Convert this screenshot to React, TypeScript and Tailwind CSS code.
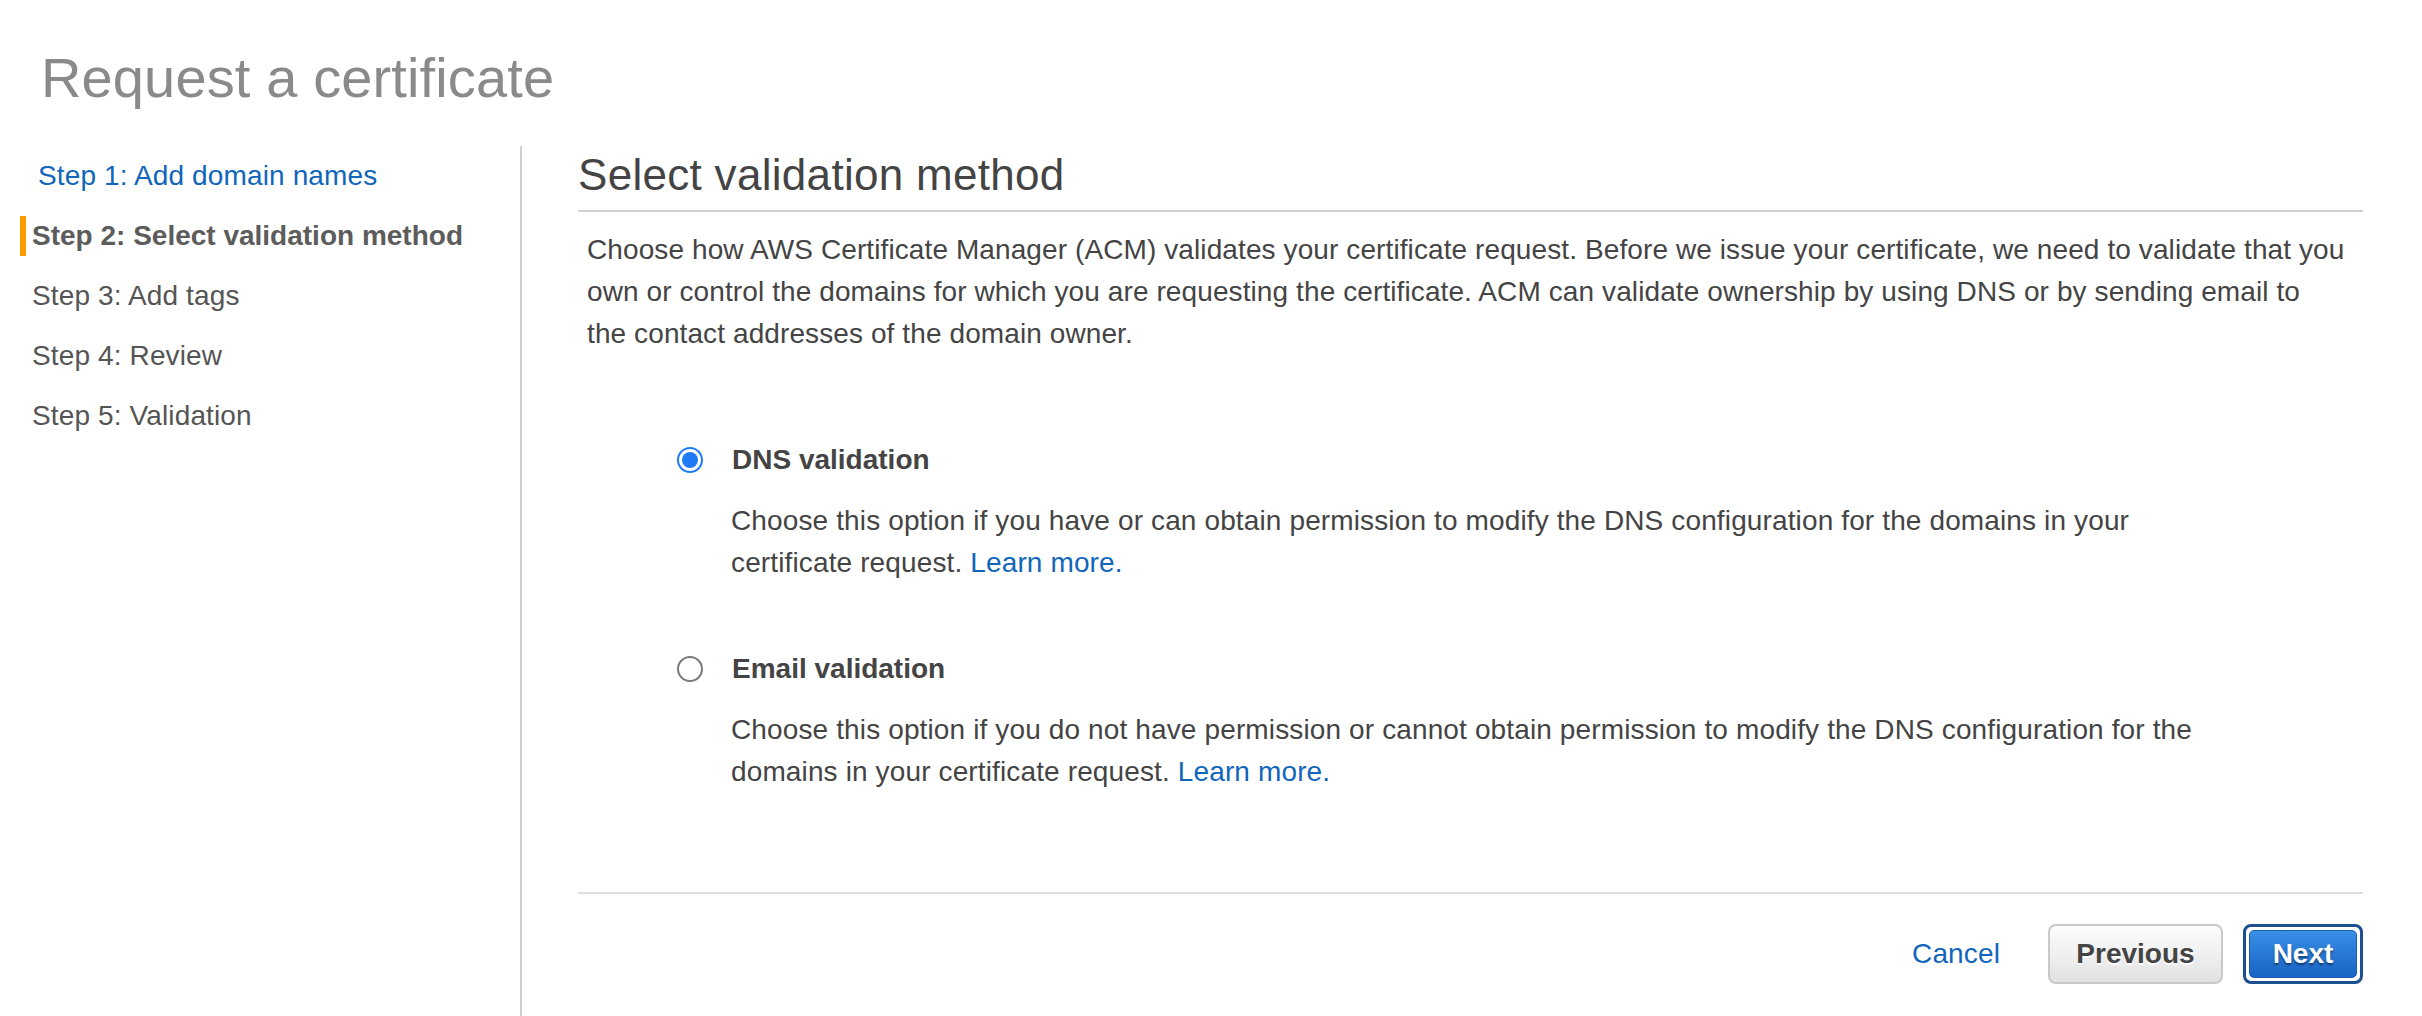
import React from "react";

function Radio({ checked }: { checked: boolean }) {
  if (checked) {
    return (
      <span className="flex h-[26px] w-[26px] shrink-0 items-center justify-center rounded-full border-2 border-[#1f7bf3] bg-white">
        <span className="h-[16px] w-[16px] rounded-full bg-[#1f7bf3]" />
      </span>
    );
  }
  return <span className="h-[26px] w-[26px] shrink-0 rounded-full border-2 border-[#7a7a7a] bg-white" />;
}

export default function App() {
  return (
    <div className="flex h-[1016px] w-full flex-col overflow-hidden bg-white font-['Liberation_Sans',Arial,Helvetica,sans-serif] tracking-[0.13px] text-[#444]">
      <h1 className="pl-[41px] pt-[46px] text-[56px] font-normal leading-[64px] text-[#8a8a8a]">
        Request a certificate
      </h1>

      <div className="mt-[36px] flex flex-1">
        {/* Left steps nav */}
        <nav className="w-[522px] shrink-0 border-r-2 border-[#cfcfcf] text-[28px]">
          <div className="flex h-[60px] items-center pl-[38px] text-[#1166bb]">Step 1: Add domain names</div>
          <div className="flex h-[60px] items-center">
            <span className="ml-[20px] h-[40px] w-[6px] bg-[#ff9900]" />
            <span className="ml-[6px] font-bold tracking-normal text-[#5c5c5c]">Step 2: Select validation method</span>
          </div>
          <div className="flex h-[60px] items-center pl-[32px] text-[#555]">Step 3: Add tags</div>
          <div className="flex h-[60px] items-center pl-[32px] text-[#555]">Step 4: Review</div>
          <div className="flex h-[60px] items-center pl-[32px] text-[#555]">Step 5: Validation</div>
        </nav>

        {/* Main content */}
        <main className="flex-1 pl-[56px] pr-[59px]">
          <h2 className="border-b-2 border-[#d0d0d0] pb-[9px] pt-[3px] text-[44px] font-normal leading-[52px] tracking-[0.3px] text-[#444]">
            Select validation method
          </h2>

          <p className="mt-[17px] pl-[9px] text-[28px] leading-[42px] tracking-[0.1px] text-[#444] whitespace-nowrap">
            Choose how AWS Certificate Manager (ACM) validates your certificate request. Before we issue your certificate, we need to validate that you
            <br />
            own or control the domains for which you are requesting the certificate. ACM can validate ownership by using DNS or by sending email to
            <br />
            the contact addresses of the domain owner.
          </p>

          <div className="mt-[84px] pl-[99px] text-[28px] leading-[42px]">
            <div>
              <label className="flex items-center gap-[29px]">
                <Radio checked={true} />
                <span className="font-bold tracking-normal text-[#444]">DNS validation</span>
              </label>
              <p className="ml-[54px] mt-[19px] whitespace-nowrap text-[#444]">
                Choose this option if you have or can obtain permission to modify the DNS configuration for the domains in your
                <br />
                certificate request. <a className="text-[#1166bb]">Learn more.</a>
              </p>
            </div>

            <div className="mt-[64px]">
              <label className="flex items-center gap-[29px]">
                <Radio checked={false} />
                <span className="font-bold tracking-normal text-[#444]">Email validation</span>
              </label>
              <p className="ml-[54px] mt-[19px] whitespace-nowrap text-[#444]">
                Choose this option if you do not have permission or cannot obtain permission to modify the DNS configuration for the
                <br />
                domains in your certificate request. <a className="text-[#1166bb]">Learn more.</a>
              </p>
            </div>
          </div>

          <div className="mt-[99px] border-t-2 border-[#dedede]" />

          <div className="mt-[30px] flex items-center justify-end text-[28px]">
            <a className="text-[#1166bb]">Cancel</a>
            <button className="ml-[48px] flex h-[60px] w-[175px] items-center justify-center rounded-[8px] border-2 border-[#c9c9c9] bg-linear-to-b from-[#fdfdfd] to-[#e2e2e2] font-bold tracking-normal text-[#444] [text-shadow:0_2px_0_#ffffff]">
              Previous
            </button>
            <div className="ml-[20px] h-[60px] w-[120px] rounded-[8px] border-[3px] border-[#1b4f8f] bg-white p-[3px]">
              <button className="flex h-full w-full items-center justify-center rounded-[5px] border border-[#1a5db0] bg-linear-to-b from-[#3a8fe6] to-[#1762c2] font-bold tracking-normal text-white [text-shadow:0_2px_2px_rgba(0,0,0,0.45)]">
                Next
              </button>
            </div>
          </div>
        </main>
      </div>
    </div>
  );
}
